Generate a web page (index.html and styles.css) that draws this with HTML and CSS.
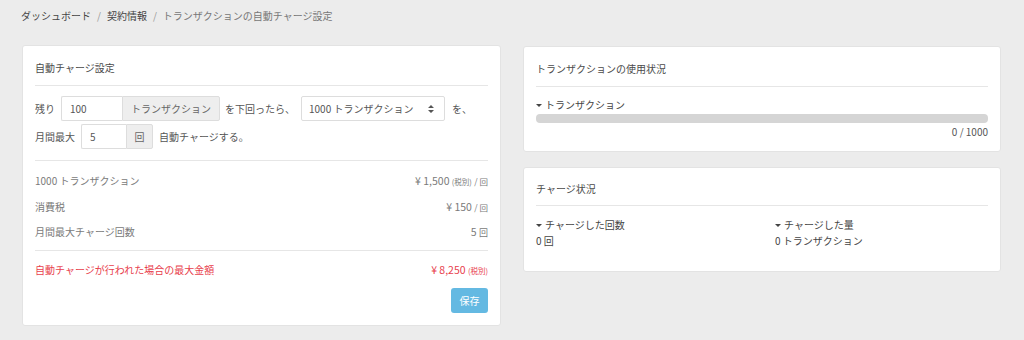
FILE: index.html
```html
<!DOCTYPE html>
<html lang="ja">
<head>
<meta charset="utf-8">
<link rel="stylesheet" href="styles.css">
</head>
<body>
<nav class="crumbs">
  <span class="crumb">ダッシュボード</span><span class="sep">/</span><span class="crumb">契約情報</span><span class="sep">/</span><span class="crumb current">トランザクションの自動チャージ設定</span>
</nav>
<main class="grid">
  <section class="card">
    <header class="card-head">自動チャージ設定</header>
    <div class="form">
      <div class="form-row">
        <span class="lbl">残り</span>
        <span class="group">
          <span class="input w-100">100</span><span class="addon w-tx">トランザクション</span>
        </span>
        <span class="lbl lbl-wide">を下回ったら、</span>
        <span class="select">
          <span>1000 トランザクション</span>
          <svg class="arrows" width="6" height="8" viewBox="0 0 6 8"><path d="M3 0L6 3H0Z M3 8L0 5H6Z" fill="#555"/></svg>
        </span>
        <span class="lbl">を、</span>
      </div>
      <div class="form-row">
        <span class="lbl">月間最大</span>
        <span class="group">
          <span class="input w-5">5</span><span class="addon w-kai">回</span>
        </span>
        <span class="lbl">自動チャージする。</span>
      </div>
    </div>
    <div class="summary">
      <div class="sum-row"><span>1000 トランザクション</span><span class="price">¥ 1,500 <small>(税別)</small> <small class="per">/ 回</small></span></div>
      <div class="sum-row"><span>消費税</span><span class="price">¥ 150 <small class="per">/ 回</small></span></div>
      <div class="sum-row"><span>月間最大チャージ回数</span><span class="price">5 <small class="unit">回</small></span></div>
    </div>
    <div class="total">
      <div class="sum-row red"><span>自動チャージが行われた場合の最大金額</span><span class="price">¥ 8,250 <small>(税別)</small></span></div>
      <div class="actions"><button class="btn">保存</button></div>
    </div>
  </section>
  <div class="side">
    <section class="card">
      <header class="card-head">トランザクションの使用状況</header>
      <div class="usage">
        <div class="caption"><i class="caret"></i>トランザクション</div>
        <div class="bar"><div class="fill" style="width:0%"></div></div>
        <div class="count">0 / 1000</div>
      </div>
    </section>
    <section class="card">
      <header class="card-head tight">チャージ状況</header>
      <div class="stats">
        <div class="stat">
          <div class="caption"><i class="caret"></i>チャージした回数</div>
          <div class="val">0 回</div>
        </div>
        <div class="stat">
          <div class="caption"><i class="caret"></i>チャージした量</div>
          <div class="val">0 トランザクション</div>
        </div>
      </div>
    </section>
  </div>
</main>
</body>
</html>
```
FILE: styles.css
```css
* { box-sizing: border-box; }
html, body { margin: 0; padding: 0; }
body {
  background: #ececec;
  font-family: "Noto Sans CJK JP", "Noto Sans", sans-serif;
  font-size: 10px;
  color: #555;
  width: 1024px;
  height: 340px;
  overflow: hidden;
}
.crumbs {
  display: flex;
  align-items: flex-start;
  padding: 9px 21px 0;
  height: 45px;
  line-height: 14px;
}
.crumb { color: #444; }
.crumb.current { color: #777; }
.sep { color: #999; margin: 0 6px; }

.grid {
  display: grid;
  grid-template-columns: 479px 478px;
  column-gap: 22px;
  padding: 0 23px 0 22px;
  align-items: start;
}
.side { display: flex; flex-direction: column; gap: 15px; padding-top: 1px; }
.card {
  background: #fff;
  border: 1px solid #e3e3e3;
  border-radius: 3px;
  padding: 0 12px;
}
.card-head {
  padding: 15px 0 10px;
  line-height: 14px;
  border-bottom: 1px solid #e6e6e6;
  color: #4a4a4a;
}
.card-head.tight { padding: 14px 0 9px; }

.form { padding: 10px 0 11px; border-bottom: 1px solid #e6e6e6; display: flex; flex-direction: column; gap: 3px; }
.form-row { display: flex; align-items: center; height: 25px; }
.lbl { margin-right: 6px; white-space: nowrap; color: #555; }
.lbl-wide { margin-left: -1px; }
.group { display: flex; height: 25px; margin-right: 6px; }
.input {
  display: flex; align-items: center;
  border: 1px solid #ddd; border-right: 0;
  border-radius: 2px 0 0 2px;
  padding-left: 8px; color: #555;
}
.addon {
  display: flex; align-items: center; justify-content: center;
  background: #eeeeee; border: 1px solid #ddd;
  border-radius: 0 2px 2px 0; color: #666;
}
.w-100 { width: 61px; }
.w-tx { width: 98px; }
.w-5 { width: 45px; }
.w-kai { width: 27px; }
.select {
  display: flex; align-items: center; justify-content: space-between;
  width: 144px; height: 25px;
  border: 1px solid #ddd; border-radius: 2px;
  padding: 0 10px 0 7px; margin-right: 7px; color: #555;
}
.arrows { display: block; }

.summary { padding: 7px 0 5px; border-bottom: 1px solid #e6e6e6; }
.sum-row {
  display: flex; justify-content: space-between; align-items: center;
  height: 25.5px; color: #7a7a7a;
}
.price { font-size: 10.5px; }
.sum-row small { font-size: 7.5px; }
.sum-row small.per { font-size: 8.5px; }
.sum-row small.unit { font-size: 9px; }
.total { padding: 6px 0 12px; }
.sum-row.red { color: #e8404c; height: 25px; }
.actions { display: flex; justify-content: flex-end; margin-top: 6px; }
.btn {
  font-family: inherit; font-size: 10px;
  width: 37px; height: 25px;
  background: #64b9e2; color: #fff;
  border: 0; border-radius: 3px; padding: 0;
}

.caption { display: flex; align-items: center; line-height: 14px; color: #444; }
.caret {
  display: inline-block; width: 0; height: 0;
  border-left: 3px solid transparent; border-right: 3px solid transparent;
  border-top: 3.5px solid #444; margin-right: 3px;
}
.usage { padding: 11px 0 12px; }
.bar { height: 9px; background: #d5d5d5; border-radius: 4px; margin-top: 2px; overflow: hidden; }
.fill { height: 100%; background: #5bc0de; }
.count { text-align: right; line-height: 14px; margin-top: 2px; color: #555; }

.stats {
  display: grid; grid-template-columns: 213px 213px; column-gap: 26px;
  padding: 12px 0 23px;
}
.val { line-height: 14px; margin-top: 2px; color: #444; }
```
